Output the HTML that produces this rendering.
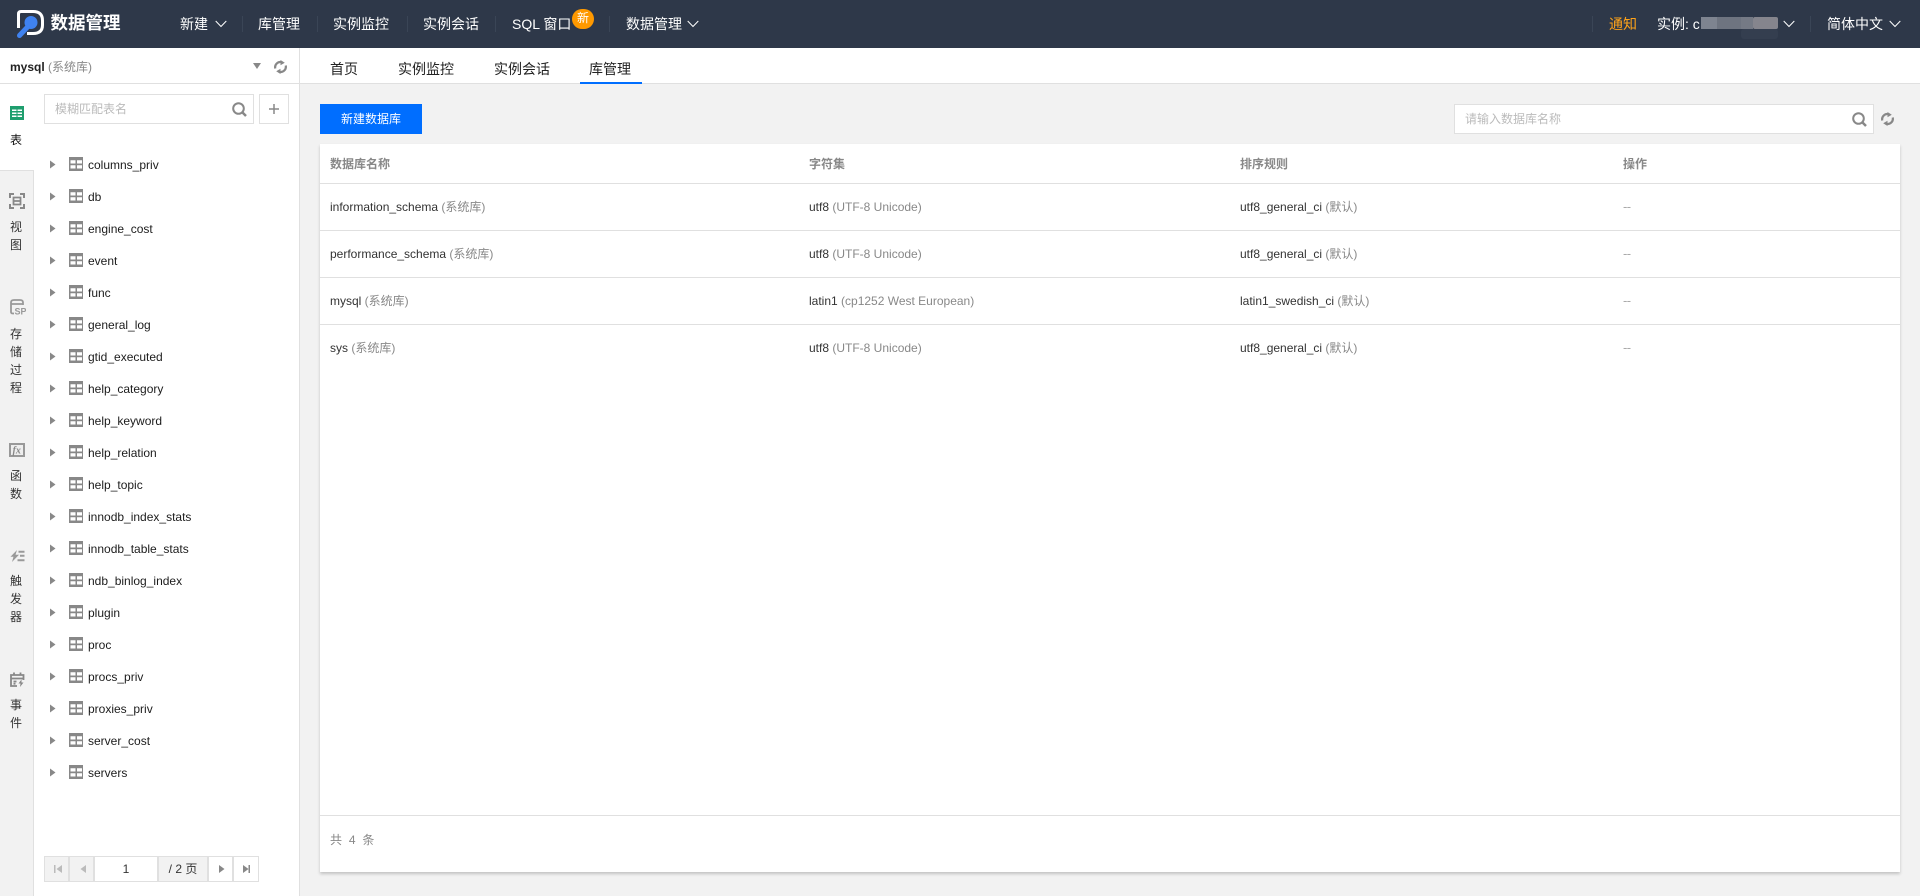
<!DOCTYPE html>
<html lang="zh-CN"><head><meta charset="utf-8"><title>数据管理</title>
<style>
*{box-sizing:border-box;margin:0;padding:0}
html,body{width:1920px;height:896px;overflow:hidden}
body{position:relative;background:#f2f2f2;font-family:"Liberation Sans","Noto Sans CJK SC",sans-serif;font-size:12px;color:#222}
.a{position:absolute;white-space:nowrap}
#hd{left:0;top:0;width:1920px;height:48px;background:#2e3849}
.n{top:0;line-height:48px;font-size:14px;color:#fff}
.dv{top:16px;width:1px;height:16px;background:#3a4556}
.ln{background:#e0e0e0}
.t{font-size:14px;line-height:20px;color:#222;top:59px}
.row{left:88px;line-height:16px;color:#1c1c1c;margin-top:1px}
.s{left:10px;width:12px;text-align:center;line-height:18px;color:#333;white-space:normal}
.c{line-height:16px;color:#333}.c i{font-style:normal;color:#888}
.c i.d{font-style:normal;color:#aaa;font-size:13px;letter-spacing:-.6px}
.h{top:156px;line-height:16px;color:#888;font-weight:bold}
.pg{top:856px;height:26px;border:1px solid #e0e0e0;text-align:center;line-height:24px;background:#fff;color:#333;margin-left:-1px}
.g{background:#f2f2f2}
</style></head><body>

<div class="a" id="hd"></div>
<svg class="a" style="left:14px;top:8px" width="32" height="32" viewBox="0 0 32 32"><path d="M4.500 20V6Q4.500 3.500 7 3.500H19Q28.500 3.500 28.500 12.500V17Q28.500 25.500 19 25.500H13" fill="none" stroke="#fff" stroke-width="3"/><circle cx="17" cy="14.500" r="6.500" fill="#3f82f0"/><path d="M13.500 19L5.500 27.500" stroke="#3f82f0" stroke-width="5" stroke-linecap="round"/></svg>
<div class="a" style="left:50.500px;top:11px;font-size:17.5px;line-height:25px;font-weight:bold;color:#fff">数据管理</div>
<div class="a n" style="left:180px">新建</div>
<svg class="a" style="left:215px;top:20px" width="12" height="8"><path d="M.7 1 6 6.500 11.300 1" fill="none" stroke="#fff"/></svg>
<div class="a dv" style="left:242px"></div>
<div class="a n" style="left:258px">库管理</div>
<div class="a dv" style="left:317px"></div>
<div class="a n" style="left:333px">实例监控</div>
<div class="a dv" style="left:407px"></div>
<div class="a n" style="left:423px">实例会话</div>
<div class="a dv" style="left:495px"></div>
<div class="a n" style="left:512px">SQL 窗口</div>
<div class="a" style="left:572px;top:9px;width:22px;height:20px;border-radius:11px;background:#f90;color:#fff;text-align:center;line-height:18px;font-size:12px">新</div>
<div class="a dv" style="left:609px"></div>
<div class="a n" style="left:626px">数据管理</div>
<svg class="a" style="left:687px;top:20px" width="12" height="8"><path d="M.7 1 6 6.500 11.300 1" fill="none" stroke="#fff"/></svg>

<div class="a dv" style="left:1592px"></div>
<div class="a n" style="left:1609px;color:#ffa319">通知</div>
<div class="a n" style="left:1657px">实例: c</div>
<svg class="a" style="left:1701px;top:17px" width="78" height="22"><rect width="16" height="12" fill="#7e8490"/><rect x="16" width="24" height="12" fill="#6e7480"/><rect x="40" width="12" height="12" fill="#757a85"/><rect x="52" width="25" height="12" rx="2" fill="#85858d"/><rect x="40" y="12" width="37" height="10" rx="3" fill="#343e4f"/></svg>
<svg class="a" style="left:1783px;top:20px" width="12" height="8"><path d="M.7 1 6 6.500 11.300 1" fill="none" stroke="#fff"/></svg>
<div class="a dv" style="left:1810px"></div>
<div class="a n" style="left:1827px">简体中文</div>
<svg class="a" style="left:1889px;top:20px" width="12" height="8"><path d="M.7 1 6 6.500 11.300 1" fill="none" stroke="#fff"/></svg>

<!-- left panel -->
<div class="a" style="left:0;top:48px;width:300px;height:848px;background:#fff;border-right:1px solid #e0e0e0"></div>
<div class="a" style="left:300px;top:48px;width:1620px;height:36px;background:#fff"></div>
<div class="a ln" style="left:0;top:83px;width:1920px;height:1px"></div>
<div class="a" style="left:10px;top:59px;line-height:16px;color:#888"><b style="color:#222">mysql</b> (系统库)</div>
<svg class="a" style="left:253px;top:63px" width="8" height="6"><path d="M0 0H8L4 6Z" fill="#888"/></svg>
<svg class="a" style="left:274px;top:60px" width="13" height="14" viewBox="0 0 13 14"><path d="M1.300 8.500A5.200 5.200 0 0 1 8 2.300M11.700 5.500A5.200 5.200 0 0 1 5 11.700" fill="none" stroke="#888" stroke-width="2.200"/><path d="M6.500 0 10.800 2.700 6.500 5.200ZM6.500 14 2.200 11.300 6.500 8.800Z" fill="#888"/></svg>
<!-- side tabs -->
<div class="a" style="left:0;top:170px;width:34px;height:726px;background:#f2f2f2;border-right:1px solid #e0e0e0;border-top:1px solid #e0e0e0"></div>
<svg class="a" style="left:10px;top:106px" width="14" height="14"><rect width="14" height="14" fill="#1f9e6e"/><path d="M2 3.500H6.500V5H2ZM7.500 3.500H12V5H7.500ZM2 6.500H6.500V8H2ZM7.500 6.500H12V8H7.500ZM2 9.500H6.500V11H2ZM7.500 9.500H12V11H7.500Z" fill="#fff"/></svg>
<div class="a s" style="top:131px;color:#111">表</div>
<svg class="a" style="left:9px;top:193px" width="16" height="16" fill="none" stroke="#888" stroke-width="2"><path d="M1 5V1H5M11 1H15V5M1 11V15H5M11 15H15V11"/><path d="M4.500 4.500H11.500V11.500H4.500ZM4.500 8H11.500" stroke-width="1.800"/></svg>
<div class="a s" style="top:218px">视图</div>
<svg class="a" style="left:10px;top:299px" width="16" height="16" fill="none" stroke="#999" stroke-width="1.800"><path d="M1 5V3.500Q1 1 4 1H10Q13 1 13 3.500V6M1 5H13M1 5V13Q1 14.500 3 14.500H4"/><text x="4.500" y="15.500" font-size="9" font-weight="bold" fill="#999" stroke="none" font-family="Liberation Sans">SP</text></svg>
<div class="a s" style="top:325px">存储过程</div>
<svg class="a" style="left:9px;top:443px" width="16" height="14"><rect x="1" y="1" width="14" height="12" fill="#eee" stroke="#999" stroke-width="2"/><text x="3.500" y="10.500" font-size="10" font-style="italic" font-weight="bold" fill="#888" font-family="Liberation Serif">fx</text></svg>
<div class="a s" style="top:467px">函数</div>
<svg class="a" style="left:10px;top:550px" width="15" height="12"><path d="M7 0 .5 6.800H3.500L2 12 9 4.800H5.500Z" fill="#999"/><path d="M8.500 .8H14.500V2.800H8.500ZM10 4.800H14.500V6.800H10ZM7.500 9.300H14.500V11.300H7.500Z" fill="#999"/></svg>
<div class="a s" style="top:572px">触发器</div>
<svg class="a" style="left:10px;top:672px" width="15" height="15" fill="none" stroke="#888" stroke-width="1.800"><path d="M7 14H1V3H13.500V8M1 6.500H13.500M4 .5V3M10.500 .5V3M3.500 9.500H6.500M3.500 11.700H5.500"/><path d="M11.500 7.500 8.500 11.500H10.500L10 15 13.500 10.500H11.500Z" fill="#888" stroke="none"/></svg>
<div class="a s" style="top:696px">事件</div>
<!-- search -->
<div class="a" style="left:44px;top:94px;width:210px;height:30px;border:1px solid #e0e0e0;background:#fff;padding-left:10px;line-height:29px;color:#bbb">模糊匹配表名</div>
<svg class="a" style="left:232px;top:102px" width="15" height="15" fill="none" stroke="#888" stroke-width="2"><circle cx="6.500" cy="6.500" r="5.300"/><path d="M10 10 14 14" stroke-width="2.500"/></svg>
<div class="a" style="left:259px;top:94px;width:30px;height:30px;border:1px solid #e0e0e0;background:#fff"></div>
<svg class="a" style="left:269px;top:104px" width="10" height="10"><path d="M5 0V10M0 5H10" stroke="#888" stroke-width="1.500"/></svg>
<!-- tree -->
<svg class="a" style="left:0;top:150px" width="90" height="640">
<defs><g id="r"><path d="M50 10.500 55.500 14.500 50 18.500Z" fill="#888"/><rect x="69" y="7" width="14" height="14" fill="#888"/><path d="M70.500 10.300H75.500V13.500H70.500ZM77 10.300H82V13.500H77ZM70.500 15.200H75.500V18.500H70.500ZM77 15.200H82V18.500H77Z" fill="#fff"/></g></defs>
<use href="#r"/><use href="#r" y="32"/><use href="#r" y="64"/><use href="#r" y="96"/><use href="#r" y="128"/><use href="#r" y="160"/><use href="#r" y="192"/><use href="#r" y="224"/><use href="#r" y="256"/><use href="#r" y="288"/><use href="#r" y="320"/><use href="#r" y="352"/><use href="#r" y="384"/><use href="#r" y="416"/><use href="#r" y="448"/><use href="#r" y="480"/><use href="#r" y="512"/><use href="#r" y="544"/><use href="#r" y="576"/><use href="#r" y="608"/>
</svg>
<div class="a row" style="top:156px">columns_priv</div>
<div class="a row" style="top:188px">db</div>
<div class="a row" style="top:220px">engine_cost</div>
<div class="a row" style="top:252px">event</div>
<div class="a row" style="top:284px">func</div>
<div class="a row" style="top:316px">general_log</div>
<div class="a row" style="top:348px">gtid_executed</div>
<div class="a row" style="top:380px">help_category</div>
<div class="a row" style="top:412px">help_keyword</div>
<div class="a row" style="top:444px">help_relation</div>
<div class="a row" style="top:476px">help_topic</div>
<div class="a row" style="top:508px">innodb_index_stats</div>
<div class="a row" style="top:540px">innodb_table_stats</div>
<div class="a row" style="top:572px">ndb_binlog_index</div>
<div class="a row" style="top:604px">plugin</div>
<div class="a row" style="top:636px">proc</div>
<div class="a row" style="top:668px">procs_priv</div>
<div class="a row" style="top:700px">proxies_priv</div>
<div class="a row" style="top:732px">server_cost</div>
<div class="a row" style="top:764px">servers</div>
<!-- pagination -->
<div class="a pg g" style="left:45px;width:25px"></div>
<div class="a pg g" style="left:70px;width:25px"></div>
<div class="a pg" style="left:95px;width:64px">1</div>
<div class="a pg g" style="left:159px;width:50px">/ 2 页</div>
<div class="a pg" style="left:209px;width:25px"></div>
<div class="a pg" style="left:234px;width:26px"></div>
<svg class="a" style="left:44px;top:856px" width="216" height="26">
<path d="M10 9H11.500V17H10ZM18 9V17L12.500 13Z" fill="#bbb"/>
<path d="M42 9V17L36.500 13Z" fill="#bbb"/>
<path d="M175 9V17L180.500 13Z" fill="#888"/>
<path d="M199 9V17L204.500 13ZM204.500 9H206V17H204.500Z" fill="#888"/>
</svg>

<!-- tabs -->
<div class="a t" style="left:330px">首页</div>
<div class="a t" style="left:398px">实例监控</div>
<div class="a t" style="left:494px">实例会话</div>
<div class="a t" style="left:589px">库管理</div>
<div class="a" style="left:580px;top:82px;width:62px;height:2px;background:#006eff"></div>

<!-- toolbar -->
<div class="a" style="left:320px;top:104px;width:102px;height:30px;background:#006eff;color:#fff;text-align:center;line-height:30px">新建数据库</div>
<div class="a" style="left:1454px;top:104px;width:420px;height:30px;border:1px solid #e0e0e0;background:#fff;padding-left:10px;line-height:28px;color:#bbb">请输入数据库名称</div>
<svg class="a" style="left:1852px;top:112px" width="15" height="15" fill="none" stroke="#888" stroke-width="2"><circle cx="6.500" cy="6.500" r="5.300"/><path d="M10 10 14 14" stroke-width="2.500"/></svg>
<svg class="a" style="left:1881px;top:112px" width="13" height="14" viewBox="0 0 13 14"><path d="M1.300 8.500A5.200 5.200 0 0 1 8 2.300M11.700 5.500A5.200 5.200 0 0 1 5 11.700" fill="none" stroke="#888" stroke-width="2.200"/><path d="M6.500 0 10.800 2.700 6.500 5.200ZM6.500 14 2.200 11.300 6.500 8.800Z" fill="#888"/></svg>

<!-- table card -->
<div class="a" style="left:320px;top:144px;width:1580px;height:728px;background:#fff;box-shadow:0 2px 3px rgba(0,0,0,.2)"></div>
<div class="a ln" style="left:320px;top:183px;width:1580px;height:1px"></div>
<div class="a ln" style="left:320px;top:230px;width:1580px;height:1px"></div>
<div class="a ln" style="left:320px;top:277px;width:1580px;height:1px"></div>
<div class="a ln" style="left:320px;top:324px;width:1580px;height:1px"></div>
<div class="a ln" style="left:320px;top:815px;width:1580px;height:1px"></div>
<div class="a h" style="left:330px">数据库名称</div>
<div class="a h" style="left:809px">字符集</div>
<div class="a h" style="left:1240px">排序规则</div>
<div class="a h" style="left:1623px">操作</div>

<div class="a c" style="left:330px;top:199px">information_schema <i>(系统库)</i></div>
<div class="a c" style="left:809px;top:199px">utf8 <i>(UTF-8 Unicode)</i></div>
<div class="a c" style="left:1240px;top:199px">utf8_general_ci <i>(默认)</i></div>
<div class="a c" style="left:1623px;top:199px"><i class="d">--</i></div>

<div class="a c" style="left:330px;top:246px">performance_schema <i>(系统库)</i></div>
<div class="a c" style="left:809px;top:246px">utf8 <i>(UTF-8 Unicode)</i></div>
<div class="a c" style="left:1240px;top:246px">utf8_general_ci <i>(默认)</i></div>
<div class="a c" style="left:1623px;top:246px"><i class="d">--</i></div>

<div class="a c" style="left:330px;top:293px">mysql <i>(系统库)</i></div>
<div class="a c" style="left:809px;top:293px">latin1 <i>(cp1252 West European)</i></div>
<div class="a c" style="left:1240px;top:293px">latin1_swedish_ci <i>(默认)</i></div>
<div class="a c" style="left:1623px;top:293px"><i class="d">--</i></div>

<div class="a c" style="left:330px;top:340px">sys <i>(系统库)</i></div>
<div class="a c" style="left:809px;top:340px">utf8 <i>(UTF-8 Unicode)</i></div>
<div class="a c" style="left:1240px;top:340px">utf8_general_ci <i>(默认)</i></div>
<div class="a c" style="left:1623px;top:340px"><i class="d">--</i></div>

<div class="a" style="left:330px;top:832px;line-height:16px;color:#888;word-spacing:3.5px">共 4 条</div>
</body></html>
